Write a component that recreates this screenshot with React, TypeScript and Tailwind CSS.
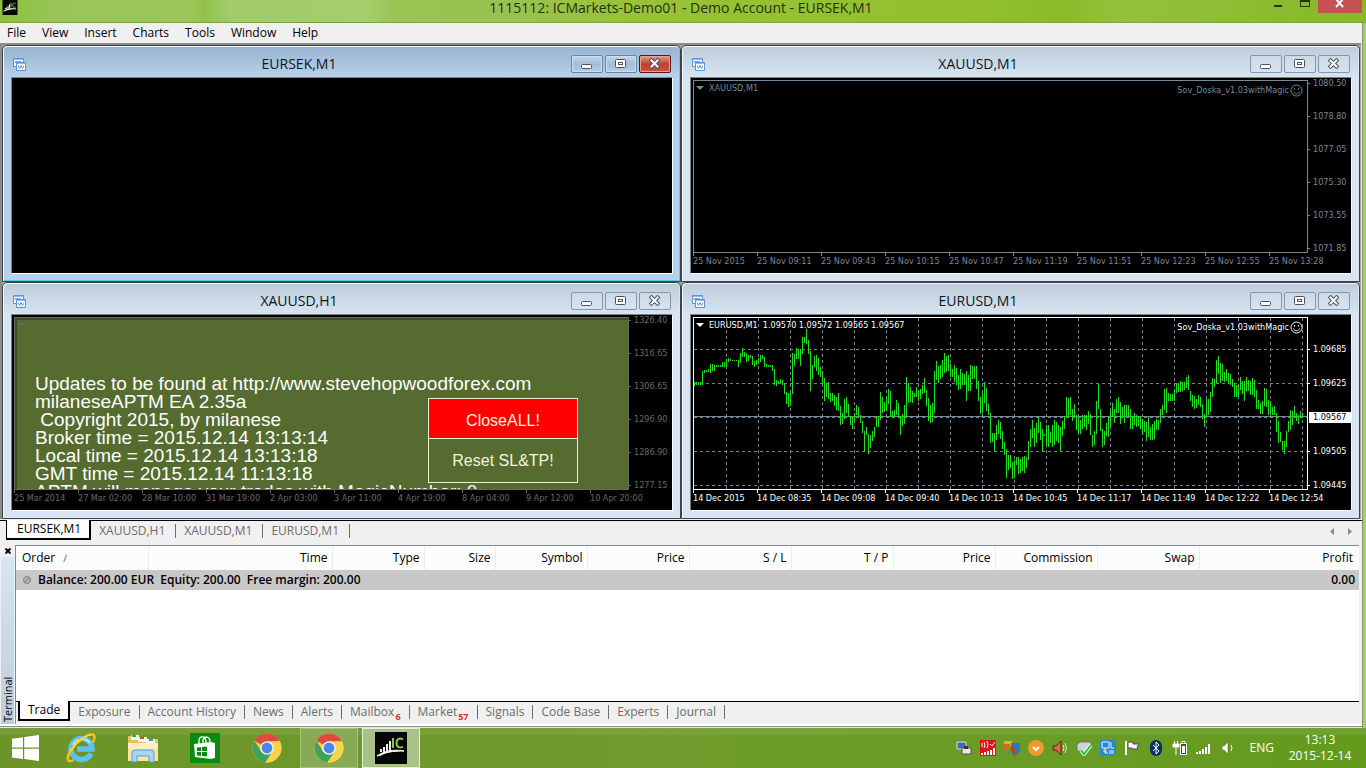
import { useState, type ReactNode } from "react"

// High/low pairs of every M1 bar, three units to a pixel, measured downwards
const eurusdBars =
  "306-318 306-314 306-314 306-314 272-314 270-278 270-276 268-276 252-278 252-272 254-272 254-260 254-260 254-260 246-262 246-262 " +
  "236-260 234-246 236-244 240-244 240-244 240-244 240-260 220-250 204-232 216-232 220-246 224-244 224-234 228-254 242-262 240-254 " +
  "234-252 226-246 226-236 230-262 252-260 254-260 254-262 254-272 268-316 300-318 302-312 296-310 300-314 312-342 336-372 338-380 " +
  "340-378 218-342 222-258 204-238 208-238 206-258 170-222 172-190 146-192 180-222 214-332 254-298 228-262 224-272 234-286 262-290 " +
  "274-312 294-362 310-350 306-356 338-366 340-364 344-378 352-390 338-392 378-434 398-432 356-416 352-398 372-412 408-436 412-448 " +
  "398-424 374-404 380-412 406-428 424-458 452-514 440-466 462-522 464-504 452-484 440-470 410-442 408-442 336-420 350-398 366-396 " +
  "352-394 326-372 332-412 392-412 390-412 360-404 370-412 408-466 402-438 376-432 292-412 308-368 322-366 332-370 338-350 322-350 " +
  "334-364 326-356 316-342 294-340 330-378 354-424 376-428 370-426 274-398 242-300 258-308 254-296 240-290 220-280 228-276 226-272 " +
  "252-290 268-292 256-306 264-316 284-330 266-328 278-314 282-314 272-362 286-332 256-332 258-296 258-296 258-328 304-364 352-402 " +
  "340-398 306-370 324-392 372-404 398-488 458-486 458-514 434-480 420-462 426-476 452-506 486-524 506-594 524-570 526-564 546-596 " +
  "540-594 532-554 532-582 536-580 530-574 528-578 530-564 484-540 446-500 420-474 444-500 430-490 410-460 426-480 446-516 462-468 " +
  "436-496 436-500 456-488 436-502 420-494 426-484 436-490 440-514 422-468 408-446 350-410 354-412 352-404 388-424 372-414 404-450 " +
  "414-460 420-462 404-446 406-442 404-450 392-432 402-466 464-500 454-496 362-462 312-386 386-452 446-500 454-496 430-468 412-472 " +
  "392-440 368-412 388-430 356-400 352-398 366-432 380-414 374-430 374-408 374-412 388-446 408-446 398-434 404-440 408-438 412-446 " +
  "416-466 422-456 426-484 410-470 440-480 432-480 422-478 418-450 420-450 388-430 376-404 326-390 324-398 338-362 342-362 342-364 " +
  "328-362 308-340 308-336 304-336 306-334 306-330 292-324 284-330 332-362 346-380 348-386 358-384 344-374 352-382 372-418 402-440 " +
  "358-412 356-404 336-396 294-352 296-322 240-310 228-282 250-310 252-304 276-306 268-304 278-308 282-316 298-320 308-350 316-352 " +
  "316-350 292-330 302-342 304-362 290-332 300-332 302-346 294-346 300-350 330-386 360-386 370-402 362-402 324-378 328-382 360-404 " +
  "362-402 380-404 378-404 398-456 424-488 456-486 484-510 482-522 452-502 424-456 390-450 392-434 378-412 400-424 404-432 392-414 400-414"

const barPath = eurusdBars
  .split(" ")
  .map((bar, i) => {
    const [high, low] = bar.split("-").map((v) => Math.round((Number(v) - 114) / 3))
    return `M${i * 2 + 0.5} ${high}V${low}`
  })
  .join("")

const menus = ["File", "View", "Insert", "Charts", "Tools", "Window", "Help"]
const chartTabs = ["EURSEK,M1", "XAUUSD,H1", "XAUUSD,M1", "EURUSD,M1"]

const terminalTabs: { name: string; count?: number }[] = [
  { name: "Trade" },
  { name: "Exposure" },
  { name: "Account History" },
  { name: "News" },
  { name: "Alerts" },
  { name: "Mailbox", count: 6 },
  { name: "Market", count: 57 },
  { name: "Signals" },
  { name: "Code Base" },
  { name: "Experts" },
  { name: "Journal" },
]

const columns = [
  { name: "Time", width: "w-[184px]" },
  { name: "Type", width: "w-[92px]" },
  { name: "Size", width: "w-[71px]" },
  { name: "Symbol", width: "w-[92px]" },
  { name: "Price", width: "w-[102px]" },
  { name: "S / L", width: "w-[102px]" },
  { name: "T / P", width: "w-[102px]" },
  { name: "Price", width: "w-[102px]" },
  { name: "Commission", width: "w-[102px]" },
  { name: "Swap", width: "w-[102px]" },
]

const comment = [
  "Updates to be found at http://www.stevehopwoodforex.com",
  "milaneseAPTM EA 2.35a",
  " Copyright 2015, by milanese",
  "Broker time = 2015.12.14 13:13:14",
  "Local time = 2015.12.14 13:13:18",
  "GMT time = 2015.12.14 11:13:18",
  "APTM will manage your trades with MagicNumber: 0",
]

function ChartIcon() {
  return (
    <svg width="15" height="15" viewBox="0 0 15 15">
      <path d="M1.500 1.500h10v8h-10z" fill="#fff" stroke="#5b93d6" />
      <path d="M2 2h9v1H2z" fill="#8db8ea" />
      <path d="M3 6l1-2 1 2 1-2 1 2 1-2 1 2" fill="none" stroke="#5b93d6" />
      <path d="M4.500 5.500h9v8h-9z" fill="#fff" stroke="#5b93d6" />
      <path d="M5 6h8v1H5z" fill="#8db8ea" />
      <path d="M6 8.500l1.500 3 1.500-3 1.500 3L12 9" fill="none" stroke="#5b93d6" />
    </svg>
  )
}

function FrameButtons({ active }: { active: boolean }) {
  const base = "flex h-[18px] w-8 items-center justify-center rounded-[2px] border"
  const plain = active
    ? "border-[#6a84a6] bg-linear-to-b from-[#c3d6ea] via-[#a3bcd8] to-[#b5cde6] ring-1 ring-inset ring-[#cfdff0]"
    : "border-[#8796b0] bg-linear-to-b from-[#ccd9e7] to-[#d7e3f1]"
  const close = active
    ? "border-[#5d1519] bg-linear-to-b from-[#dc9a8c] via-[#c0402c] to-[#c9553a] ring-1 ring-inset ring-[#e0a596]"
    : "border-[#8796b0] bg-linear-to-b from-[#ccd9e7] to-[#d7e3f1]"
  return (
    <div className="flex gap-[2px]">
      <button aria-label="Minimize" className={`${base} ${plain}`}>
        <svg width="12" height="12" viewBox="0 0 12 12">
          <rect x="0.500" y="6.500" width="10" height="4" rx="1" fill="#fff" stroke="#4b5260" />
        </svg>
      </button>
      <button aria-label="Maximize" className={`${base} ${plain}`}>
        <svg width="12" height="12" viewBox="0 0 12 12">
          <rect x="0.500" y="1.500" width="10" height="8" rx="1" fill="#fff" stroke="#4b5260" />
          <rect x="3.500" y="4.500" width="4" height="2" fill="#fff" stroke="#4b5260" />
        </svg>
      </button>
      <button aria-label="Close" className={`${base} ${close}`}>
        <svg width="12" height="12" viewBox="0 0 12 12">
          <path d="M2.500 2.500l6 6m0-6l-6 6" stroke="#4b5260" strokeWidth="4" strokeLinecap="square" />
          <path d="M2.500 2.500l6 6m0-6l-6 6" stroke="#fff" strokeWidth="2" strokeLinecap="square" />
        </svg>
      </button>
    </div>
  )
}

function ChartWindow({ title, active = false, children }: { title: string; active?: boolean; children?: ReactNode }) {
  return (
    <section
      className={`flex min-h-0 min-w-0 flex-col rounded-t-[5px] border border-[#40444a] pb-[7px] ${
        active
          ? "bg-[#b9d1ea] shadow-[inset_1px_1px_0_#f2f7fc,inset_-1px_-1px_0_#4fd0ee]"
          : "bg-[#d7e4f2] shadow-[inset_1px_1px_0_#f2f7fc]"
      }`}
    >
      <header
        className={`m-px mb-0 flex h-[30px] shrink-0 items-center rounded-t-[4px] bg-linear-to-b pt-1 pr-2 pl-2 ${
          active ? "from-[#99b4d1] to-[#b9d1ea]" : "from-[#bfcddb] to-[#d7e4f2]"
        }`}
      >
        <ChartIcon />
        <h2 className="flex-1 text-center text-[14px] leading-[18px] text-[#10151c]">{title}</h2>
        <FrameButtons active={active} />
      </header>
      <div className="mr-[7px] ml-2 flex min-h-0 flex-1 border border-t-[#808080] border-r-white border-b-white border-l-[#808080] bg-black">
        {children}
      </div>
    </section>
  )
}

type ChartProps = {
  tone: string
  line: string
  tick: string
  prices: string[]
  priceRows: string
  current?: string
  dates: string[]
  children?: ReactNode
}

function Chart({ tone, line, tick, prices, priceRows, current, dates, children }: ChartProps) {
  return (
    <div className={`flex min-w-0 flex-1 flex-col overflow-hidden pl-[2px] font-['DejaVu_Sans_Condensed','DejaVu_Sans',sans-serif] text-[9px] leading-[11px] ${tone}`}>
      <div className="flex min-h-0 flex-1">
        <div className={`relative mt-[2px] min-w-0 flex-1 overflow-hidden border ${line}`}>{children}</div>
        <ul className={`flex w-[43px] flex-col ${priceRows}`}>
          {prices.map((price) => (
            <li key={price} className="flex items-center">
              {price === current ? (
                <span className="ml-px flex-1 bg-white pl-1 text-black">{price}</span>
              ) : (
                <>
                  <span className={`mr-[3px] h-px w-[2px] ${tick}`} />
                  {price}
                </>
              )}
            </li>
          ))}
        </ul>
      </div>
      <ol className="flex h-5 shrink-0">
        {dates.map((date) => (
          <li key={date} className="w-16 shrink-0 whitespace-nowrap">
            <span className={`block h-[3px] w-px ${tick}`} />
            {date}
          </li>
        ))}
      </ol>
    </div>
  )
}

function ExpertName() {
  return (
    <div className="absolute top-[3px] right-[4px] flex items-center gap-px">
      Sov_Doska_v1.03withMagic
      <svg width="13" height="13" viewBox="0 0 13 13" fill="none" stroke="currentColor">
        <circle cx="6.500" cy="6.500" r="5.500" />
        <path d="M3.500 7.500c1 3 5 3 6 0M4.500 4v1.500M8.500 4v1.500" />
      </svg>
    </div>
  )
}

function SymbolName({ children }: { children?: ReactNode }) {
  return (
    <div className="absolute top-[2px] left-[2px] flex items-center gap-[5px] whitespace-pre">
      <svg width="8" height="11" viewBox="0 0 8 11">
        <path d="M0 3h8L4 7z" fill="currentColor" />
      </svg>
      {children}
    </div>
  )
}

function EurusdPlot() {
  return (
    <svg className="block h-full w-full" shapeRendering="crispEdges" fill="none">
      <g stroke="#778391" strokeDasharray="3 3">
        {Array.from({ length: 19 }, (_, i) => (
          <line key={i} x1={32.5 + i * 32} x2={32.5 + i * 32} y1="0" y2="100%" />
        ))}
        {[31.5, 65.5, 99.5, 133.5, 167.5].map((y) => (
          <line key={y} x1="0" x2="100%" y1={y} y2={y} />
        ))}
      </g>
      <line x1="0" x2="100%" y1="98.500" y2="98.500" stroke="#778899" />
      <path d={barPath} stroke="#1fe01f" />
    </svg>
  )
}

function ChromeLogo() {
  return (
    <svg width="30" height="30" viewBox="0 0 30 30">
      <circle cx="15" cy="15" r="14.500" fill="#f7cf3d" />
      <path d="M15 15L2.400 7.800A14.500 14.500 0 0 1 27.800 8.300H15z" fill="#dd4b3e" />
      <path d="M2.400 7.800A14.500 14.500 0 0 0 13.500 29.400L20.800 18.400 15 15 9.200 18.400z" fill="#3fa45b" />
      <path d="M27.800 8.300A14.500 14.500 0 0 1 13.500 29.400L20.800 18.300 21.500 8.300z" fill="#f9d448" />
      <circle cx="15" cy="15" r="6.800" fill="#f4f6f4" />
      <circle cx="15" cy="15" r="5.400" fill="#4a86ea" />
    </svg>
  )
}

function WindowsLogo() {
  return (
    <svg width="27" height="26" viewBox="0 0 27 26" fill="#fff">
      <path d="M0 3.800L11 2.200v10.300H0zM12.200 2L27 0v12.500H12.200zM0 13.700h11V24L0 22.400zM12.200 13.700H27V26l-14.800-2z" />
    </svg>
  )
}

function ExplorerBrowserLogo() {
  return (
    <svg width="30" height="30" viewBox="0 0 30 30" fill="none">
      <path d="M25 20.500A10.500 10.500 0 1 1 26 16H11" stroke="#5cc3f0" strokeWidth="5.500" />
      <path d="M24 10A10 10 0 0 0 7 12" stroke="#b4e8fb" strokeWidth="2" />
      <path d="M7.500 27C1 31 0 25 4.500 18 10 9 21 .5 26.500 1.500c3 .6 2 5 .5 8" stroke="#f3c21c" strokeWidth="2.500" />
      <path d="M4.500 18C10 9 20 2 25 2" stroke="#fbe376" strokeWidth="1" />
    </svg>
  )
}

function FolderLogo() {
  return (
    <svg width="32" height="30" viewBox="0 0 32 30">
      <path d="M1 3h10l2 3h18v22H1z" fill="#e3c267" />
      <path d="M4 2h8v5H4z" fill="#f5f5ec" />
      <path d="M5 2h4v2H5z" fill="#35a845" />
      <path d="M11 4h9v5h-9z" fill="#f5f5ec" />
      <path d="M13 4h4v2h-4z" fill="#d9482f" />
      <path d="M19 6h9v4h-9z" fill="#f5f5ec" />
      <path d="M22 6h4v2h-4z" fill="#3e8ed8" />
      <path d="M1 10h30v18H1z" fill="#f8e5a0" />
      <path d="M1 10h30v6H1z" fill="#fcf0c0" />
      <path d="M5 29V20q0-3 3-3h16q3 0 3 3v9h-5v-6H10v6z" fill="#a6d7f2" stroke="#5a9ccb" />
    </svg>
  )
}

function StoreLogo() {
  return (
    <svg width="30" height="30" viewBox="0 0 30 30">
      <path d="M0 0h30v30H0z" fill="#0a8a10" />
      <path d="M4 11l17-2 4 1v15l-4 1-16-2z" fill="#fff" />
      <path d="M9 11V7q1-4 4-3 3 0 3 6M13 10V7q1-3 4-3 3 1 3 5" fill="none" stroke="#fff" strokeWidth="1.300" />
      <path d="M7 14.500l4-.5v4H7zM12 14l5-.6V18h-5zM7 19h4v4l-4-.4zM12 19h5v4.600l-5-.5z" fill="#0a8a10" />
    </svg>
  )
}

function BrokerLogo({ className }: { className: string }) {
  return (
    <svg className={className} viewBox="0 0 32 32">
      <path d="M0 0h32v32H0z" fill="#050505" />
      <path d="M5 17h2v3H5zM8 15h2v5H8zM11 12h2v7h-2zM14 9h2v10h-2z" fill="#f4f4f4" />
      <path d="M2 24C9 19 18 17 29 19 19 19 11 20 6 23z" fill="#fff" stroke="#fff" />
      <path d="M18 6v10M28 7.500c-3-2-6.500-1-6.500 3.500s3.500 5.500 6.500 3.500" fill="none" stroke="#8dc63f" strokeWidth="2" />
    </svg>
  )
}

function TrayIcons() {
  const icons: { name: string; art: ReactNode }[] = [
    {
      name: "Remote display",
      art: (
        <>
          <path d="M1 2h9v7H1z" fill="#3e6db4" stroke="#d8dde6" />
          <path d="M6 8h9v6H6z" fill="#e8e8e8" stroke="#555" />
          <path d="M8 6h4v3H8z" fill="#333" />
        </>
      ),
    },
    {
      name: "Mobile signal",
      art: (
        <>
          <path d="M0 0h16v16H0z" fill="#dd1212" />
          <path d="M2 13v2M5 12v3M8 11v4M11 10v5M14 8v7" stroke="#fff" strokeWidth="2" />
          <path d="M2 3v4M4 2q2 3 0 6M7 1q2 4 0 7M10 4l2 2 3-4" fill="none" stroke="#fff" />
        </>
      ),
    },
    {
      name: "Security",
      art: (
        <>
          <path d="M0 1h8v5H0z" fill="#e1b02c" />
          <path d="M0 4h6v6H0z" fill="#d46a25" />
          <path d="M7 3h9v7q-1 4-5 6-3-2-4-6z" fill="#2f75c4" />
          <path d="M7 8h4v8q-3-2-4-6z" fill="#c93a2c" />
          <path d="M1 11h6v4H3z" fill="#4ba23c" />
        </>
      ),
    },
    {
      name: "Updates",
      art: (
        <>
          <circle cx="8" cy="8" r="8" fill="#f29a2e" />
          <path d="M5 7l3 3 3-3" fill="none" stroke="#fff" strokeWidth="2" />
        </>
      ),
    },
    {
      name: "Sound manager",
      art: (
        <>
          <path d="M1 6h3l5-5v14l-5-5H1z" fill="#d9674c" stroke="#5a1f14" />
          <path d="M11 5q2 3 0 6M13 3q3 5 0 10" fill="none" stroke="#e7e0cf" />
        </>
      ),
    },
    {
      name: "Safely remove hardware",
      art: (
        <>
          <path d="M1 5l3-3h11v6l-2 3H1z" fill="#cfd3d6" stroke="#777" />
          <path d="M5 10l3 4 7-9" fill="none" stroke="#e6f5e4" strokeWidth="4" />
          <path d="M5 10l3 4 7-9" fill="none" stroke="#2fbf3a" strokeWidth="2" />
        </>
      ),
    },
    {
      name: "Graphics",
      art: (
        <>
          <rect width="16" height="16" rx="2" fill="#2a86cf" />
          <path d="M2 2h7v6H2zM11 2v6h3M3 11h4M9 11h5M9 13h5M5 8v5h3" fill="none" stroke="#e6f4ff" />
        </>
      ),
    },
    {
      name: "Action center",
      art: (
        <>
          <path d="M2 1v14" stroke="#fff" strokeWidth="2" />
          <path d="M4 2h5v2h6l-2 3 1 2H8V8H4z" fill="#fff" stroke="#4b4b4b" />
        </>
      ),
    },
    {
      name: "Bluetooth",
      art: (
        <>
          <rect x="2" width="12" height="16" rx="6" fill="#0c2f66" />
          <path d="M5 5l6 6-3 3V2l3 3-6 6" fill="none" stroke="#fff" />
        </>
      ),
    },
    {
      name: "Battery",
      art: (
        <>
          <path d="M8.500 3.500h6v11h-6zM10 1.500h3v2h-3z" fill="#3f5a20" stroke="#fff" />
          <path d="M10 6h3v7h-3z" fill="#fff" />
          <path d="M2.500 1v3M5.500 1v3M1 4h6v3H1zM4 7v8" fill="#fff" stroke="#fff" />
        </>
      ),
    },
    {
      name: "Network",
      art: <path d="M1 12v2M4 11v3M7 9v5M10 7v7M13 4v10" stroke="#fff" strokeWidth="2" />,
    },
    {
      name: "Volume",
      art: (
        <>
          <path d="M2 6h2l4-4v12l-4-4H2z" fill="#fff" stroke="#4b5a33" strokeWidth="0.500" />
          <path d="M11 5q2 3 0 6" fill="none" stroke="#fff" />
        </>
      ),
    },
  ]
  return (
    <div className="flex gap-2">
      {icons.map((icon) => (
        <button key={icon.name} aria-label={icon.name}>
          <svg width="16" height="16" viewBox="0 0 16 16">{icon.art}</svg>
        </button>
      ))}
    </div>
  )
}

export default function App() {
  const [chartTab, setChartTab] = useState("EURSEK,M1")
  const [terminalTab, setTerminalTab] = useState("Trade")

  return (
    <div className="flex h-screen flex-col overflow-hidden bg-[#a3cf6a] font-['Open_Sans','Noto_Sans',sans-serif] text-[12px] leading-4 text-black">
      {/* Title bar */}
      <header className="flex h-[23px] shrink-0 items-start border-b border-[#7fa436] bg-[linear-gradient(to_right,#8dbf3f_0%,#98c556_4%,#99c657_14%,#92c24c_15%,#a2cd6a_17%,#a4ce6c_27%,#99c454_29%,#98c350_38%,#98c238_45%,#92bf30_70%,#8abb2a_78%,#93c23a_82%,#86b828_100%)] pl-[2px]">
        <BrokerLogo className="h-[15px] w-4" />
        <h1 className="flex-1 pl-20 text-center text-[14px] leading-4 text-[#24330c]">
          1115112: ICMarkets-Demo01 - Demo Account - EURSEK,M1
        </h1>
        <div className="flex pr-1">
          <button aria-label="Minimize" className="flex h-[13px] w-[27px] justify-center">
            <span className="mt-[5px] h-[2px] w-2 bg-[#24330c]" />
          </button>
          <button aria-label="Maximize" className="flex h-[13px] w-[27px] justify-center">
            <span className="h-[7px] w-[10px] border border-t-2 border-[#24330c]" />
          </button>
          <button aria-label="Close" className="flex h-[13px] w-11 justify-center bg-[#c75050]">
            <svg width="10" height="8" viewBox="0 0 10 8">
              <path d="M1 -1l7 8M8 -1l-7 8" stroke="#fff" strokeWidth="2" />
            </svg>
          </button>
        </div>
      </header>

      <main className="mr-[3px] flex min-h-0 flex-1 flex-col border-r border-[#7f9a5a] bg-[#f0f0f0]">
        <nav className="flex h-5 shrink-0 items-center gap-4 pl-[7px]">
          {menus.map((menu) => (
            <button key={menu}>{menu}</button>
          ))}
        </nav>

        {/* Tiled chart windows */}
        <div className="mr-px grid min-h-0 flex-1 grid-cols-2 grid-rows-2 border-t-2 border-l-2 border-[#8c8c8c] bg-[#a0a0a0] pr-px">
          <ChartWindow title="EURSEK,M1" active />
          <ChartWindow title="XAUUSD,M1">
            <Chart
              tone="text-[#778899]"
              line="border-[#778899]"
              tick="bg-[#778899]"
              priceRows="gap-[22px]"
              prices={["1080.50", "1078.80", "1077.05", "1075.30", "1073.55", "1071.85"]}
              dates={[
                "25 Nov 2015", "25 Nov 09:11", "25 Nov 09:43", "25 Nov 10:15", "25 Nov 10:47",
                "25 Nov 11:19", "25 Nov 11:51", "25 Nov 12:23", "25 Nov 12:55", "25 Nov 13:28",
              ]}
            >
              <SymbolName>XAUUSD,M1</SymbolName>
              <ExpertName />
            </Chart>
          </ChartWindow>
          <ChartWindow title="XAUUSD,H1">
            <Chart
              tone="text-[#696969]"
              line="border-[#696969]"
              tick="bg-[#696969]"
              priceRows="gap-[22px]"
              prices={["1326.40", "1316.65", "1306.65", "1296.90", "1286.90", "1277.15"]}
              dates={[
                "25 Mar 2014", "27 Mar 02:00", "28 Mar 10:00", "31 Mar 19:00", "2 Apr 03:00",
                "3 Apr 11:00", "4 Apr 19:00", "8 Apr 04:00", "9 Apr 12:00", "10 Apr 20:00",
              ]}
            >
              <div className="h-full border-t-2 border-l-2 border-[#3d4f1c] bg-[#556b2f]">
                <SymbolName />
                <div className="pt-[55px] pl-[18px] font-['Liberation_Sans',Arial,sans-serif] text-[19px] leading-[18px] whitespace-pre text-white">
                  {comment.map((row) => (
                    <p key={row} className="w-fit">{row}</p>
                  ))}
                </div>
                <div className="absolute top-20 right-[50px] flex w-[150px] flex-col border border-[#f0f0d0] bg-[#556b2f] font-['Liberation_Sans',Arial,sans-serif] text-[16px] text-[#f5f5dc]">
                  <button className="h-10 border-b border-[#f0f0d0] bg-[#ff0000] pt-1">CloseALL!</button>
                  <button className="h-[43px]">Reset SL&amp;TP!</button>
                </div>
              </div>
            </Chart>
          </ChartWindow>
          <ChartWindow title="EURUSD,M1">
            <Chart
              tone="text-white"
              line="border-white"
              tick="bg-white"
              priceRows="gap-[23px] pt-[29px]"
              current="1.09567"
              prices={["1.09685", "1.09625", "1.09567", "1.09505", "1.09445"]}
              dates={[
                "14 Dec 2015", "14 Dec 08:35", "14 Dec 09:08", "14 Dec 09:40", "14 Dec 10:13",
                "14 Dec 10:45", "14 Dec 11:17", "14 Dec 11:49", "14 Dec 12:22", "14 Dec 12:54",
              ]}
            >
              <EurusdPlot />
              <SymbolName>EURUSD,M1  1.09570 1.09572 1.09565 1.09567</SymbolName>
              <ExpertName />
            </Chart>
          </ChartWindow>
        </div>

        {/* Chart tabs */}
        <div className="mt-px flex h-[21px] shrink-0 text-[#6d6d6d]">
          <span className="w-[6px] border-t border-black" />
          {chartTabs.map((tab) =>
            tab === chartTab ? (
              <button key={tab} className="h-5 border-r-2 border-b-2 border-l border-black bg-white pr-2 pl-[10px] text-black">
                {tab}
              </button>
            ) : (
              <button key={tab} onClick={() => setChartTab(tab)} className="border-t border-black">
                <span className="block border-r border-[#6d6d6d] pr-[10px] pl-2 leading-[14px]">{tab}</span>
              </button>
            )
          )}
          <div className="flex flex-1 items-center justify-end gap-[14px] border-t border-black pr-[10px]">
            <button aria-label="Scroll tabs left">
              <svg width="4" height="7" viewBox="0 0 4 7"><path d="M4 0v7L0 3.500z" fill="#8a8a8a" /></svg>
            </button>
            <button aria-label="Scroll tabs right">
              <svg width="4" height="7" viewBox="0 0 4 7"><path d="M0 0v7l4-3.500z" fill="#8a8a8a" /></svg>
            </button>
          </div>
        </div>

        {/* Terminal */}
        <div className="mt-1 flex h-[181px] shrink-0 border-b-2 border-white">
          <aside className="flex w-[15px] shrink-0 flex-col px-px">
            <button aria-label="Close terminal" className="flex h-3 items-center justify-center">
              <svg width="6" height="6" viewBox="0 0 6 6"><path d="M0.500 0.500l5 5m0-5l-5 5" stroke="#000" strokeWidth="2" /></svg>
            </button>
            <div className="flex flex-1 rotate-180 items-center justify-start bg-linear-to-b from-[#bfcddb] to-[#d7e4f2] pt-[2px] [writing-mode:vertical-rl]">
              <span className="text-[11px] leading-[13px]">Terminal</span>
            </div>
          </aside>
          <div className="mr-[3px] flex min-w-0 flex-1 flex-col border-t border-l border-[#828790]">
            <div className="flex-1 bg-white">
              <table className="w-full table-fixed border-collapse">
                <thead>
                  <tr className="h-6 bg-[#fcfcfc]">
                    <th scope="col" className="w-[132px] border-r border-[#e3edf7] pl-[6px] text-left font-normal">
                      Order<span className="pl-2 text-[10px] text-[#555]">∕</span>
                    </th>
                    {columns.map((column, i) => (
                      <th key={i} scope="col" className={`${column.width} border-r border-[#e3edf7] pr-1 text-right font-normal`}>
                        {column.name}
                      </th>
                    ))}
                    <th scope="col" className="pr-[6px] text-right font-normal">Profit</th>
                  </tr>
                </thead>
                <tbody>
                  <tr className="h-5 bg-[#c8c8c8] font-semibold">
                    <td colSpan={11}>
                      <div className="flex items-center gap-[6px] pl-[6px] whitespace-pre">
                        <svg width="10" height="10" viewBox="0 0 10 10">
                          <circle cx="5" cy="5" r="3.500" fill="#b5b5b5" stroke="#808080" />
                          <path d="M3 7l4-4" stroke="#808080" />
                        </svg>
                        Balance: 200.00 EUR  Equity: 200.00  Free margin: 200.00
                      </div>
                    </td>
                    <td className="pr-1 text-right">0.00</td>
                  </tr>
                </tbody>
              </table>
            </div>
            <div className="flex h-[23px] text-[#6d6d6d]">
              <span className="w-[2px] border-t border-black" />
              {terminalTabs.map((tab) =>
                tab.name === terminalTab ? (
                  <button key={tab.name} className="h-5 border-x-2 border-b-2 border-black bg-white px-2 text-black">
                    {tab.name}
                  </button>
                ) : (
                  <button key={tab.name} onClick={() => setTerminalTab(tab.name)} className="flex items-start border-t border-black pt-[3px]">
                    <span className="flex h-[14px] border-r border-[#6d6d6d] px-2 leading-[14px]">
                      {tab.name}
                      {tab.count && <sub className="pl-px text-[9px] leading-[20px] font-bold text-[#d03030]">{tab.count}</sub>}
                    </span>
                  </button>
                )
              )}
              <span className="flex-1 border-t border-black" />
            </div>
          </div>
        </div>
        <div className="h-[2px] shrink-0 border-y border-t-[#8c8c8c] border-b-[#e4ecd8]" />
      </main>

      {/* Taskbar */}
      <footer className="flex h-10 shrink-0 items-stretch bg-linear-to-r from-[#6c9428] via-[#6f9c2c] to-[#639b1c] text-white">
        <div className="flex flex-1 items-stretch shadow-[inset_0_7px_0_#ffffff14]">
          <button aria-label="Start" className="flex w-[50px] items-center justify-center"><WindowsLogo /></button>
          <button aria-label="Internet Explorer" className="flex w-[62px] items-center justify-center"><ExplorerBrowserLogo /></button>
          <button aria-label="File Explorer" className="flex w-[62px] items-center justify-center"><FolderLogo /></button>
          <button aria-label="Store" className="flex w-[62px] items-center justify-center"><StoreLogo /></button>
          <button aria-label="Chrome" className="flex w-[62px] items-center justify-center"><ChromeLogo /></button>
          <button aria-label="Chrome window" className="mx-[2px] flex w-[58px] items-center justify-center border border-[#a5c27a] bg-[#87ab55]"><ChromeLogo /></button>
          <button aria-label="MetaTrader" className="ml-[2px] flex w-[58px] items-center justify-center border border-[#e6efda] bg-[#a9c187]"><BrokerLogo className="size-8" /></button>
          <div className="ml-auto flex items-center">
            <TrayIcons />
            <button className="ml-[14px] text-[12px]">ENG</button>
            <time className="w-[92px] text-center leading-4">
              13:13
              <br />
              2015-12-14
            </time>
          </div>
        </div>
      </footer>
    </div>
  )
}
